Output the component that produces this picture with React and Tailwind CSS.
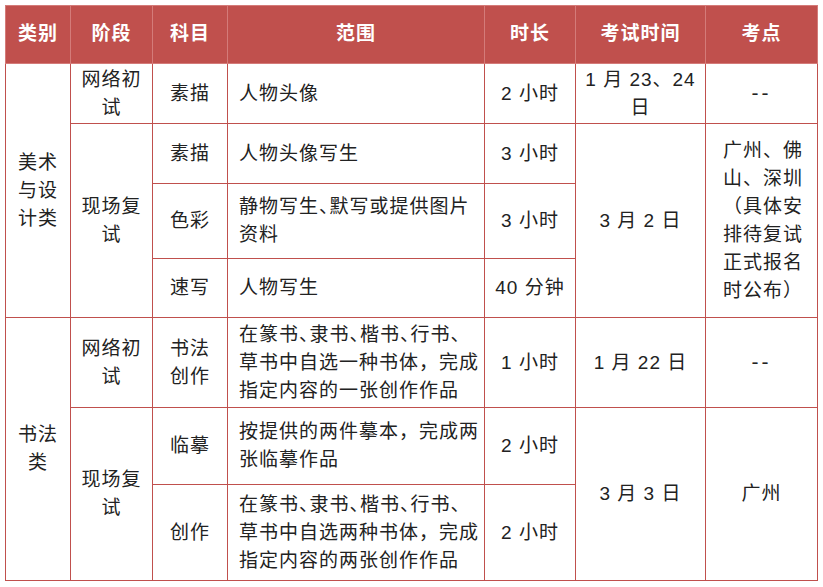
import React from 'react'

const font = "font-['Liberation_Sans','Noto_Sans_CJK_SC',sans-serif]"
const td = 'border border-[#c0504d] text-center align-middle px-[6px]'
const left = 'border border-[#c0504d] text-left align-middle pl-[11px] pr-[4px] leading-[28px] whitespace-nowrap'

// half-width punctuation like the Word table
const P = ({ children }) => <span className="[font-feature-settings:'halt']">{children}</span>
const Dash = () => <span className='text-[21px] tracking-[3px]'>--</span>

export default function App() {
    return (
        <div className={`bg-white p-[5px] ${font}`}>
            <table className='table-fixed border-collapse w-[812px] text-[19px] tracking-[1px] text-[#222]'>
                <colgroup>
                    <col className='w-[65px]' />
                    <col className='w-[82px]' />
                    <col className='w-[75px]' />
                    <col className='w-[257px]' />
                    <col className='w-[91px]' />
                    <col className='w-[130px]' />
                    <col className='w-[112px]' />
                </colgroup>
                <thead>
                    <tr className='h-[58px] bg-[#c0504d] text-white font-bold'>
                        <th className='border border-[#d47b79] font-bold'>类别</th>
                        <th className='border border-[#d47b79] font-bold'>阶段</th>
                        <th className='border border-[#d47b79] font-bold'>科目</th>
                        <th className='border border-[#d47b79] font-bold'>范围</th>
                        <th className='border border-[#d47b79] font-bold'>时长</th>
                        <th className='border border-[#d47b79] font-bold'>考试时间</th>
                        <th className='border border-[#d47b79] font-bold'>考点</th>
                    </tr>
                </thead>
                <tbody className='leading-[28px]'>
                    <tr className='h-[60px]'>
                        <td rowSpan={4} className={td}>美术<br />与设<br />计类</td>
                        <td className={td}>网络初<br />试</td>
                        <td className={td}>素描</td>
                        <td className={left}>人物头像</td>
                        <td className={td}>2 小时</td>
                        <td className={td}>1 月 23、24<br />日</td>
                        <td className={td}><Dash /></td>
                    </tr>
                    <tr className='h-[60px]'>
                        <td rowSpan={3} className={td}>现场复<br />试</td>
                        <td className={td}>素描</td>
                        <td className={left}>人物头像写生</td>
                        <td className={td}>3 小时</td>
                        <td rowSpan={3} className={td}>3 月 2 日</td>
                        <td rowSpan={3} className={`${td} text-left pl-[17px]`}>
                            广州、佛<br />山、深圳<br />（具体安<br />排待复试<br />正式报名<br />时公布）
                        </td>
                    </tr>
                    <tr className='h-[75px]'>
                        <td className={td}>色彩</td>
                        <td className={left}>静物写生<P>、</P>默写或提供图片<br />资料</td>
                        <td className={td}>3 小时</td>
                    </tr>
                    <tr className='h-[59px]'>
                        <td className={td}>速写</td>
                        <td className={left}>人物写生</td>
                        <td className={td}>40 分钟</td>
                    </tr>
                    <tr className='h-[90px]'>
                        <td rowSpan={3} className={td}>书法<br />类</td>
                        <td className={td}>网络初<br />试</td>
                        <td className={td}>书法<br />创作</td>
                        <td className={left}>
                            在篆书<P>、</P>隶书<P>、</P>楷书<P>、</P>行书<P>、</P><br />
                            草书中自选一种书体，完成<br />
                            指定内容的一张创作作品
                        </td>
                        <td className={td}>1 小时</td>
                        <td className={td}>1 月 22 日</td>
                        <td className={td}><Dash /></td>
                    </tr>
                    <tr className='h-[77px]'>
                        <td rowSpan={2} className={td}>现场复<br />试</td>
                        <td className={td}>临摹</td>
                        <td className={left}>按提供的两件摹本，完成两<br />张临摹作品</td>
                        <td className={td}>2 小时</td>
                        <td rowSpan={2} className={td}>3 月 3 日</td>
                        <td rowSpan={2} className={td}>广州</td>
                    </tr>
                    <tr className='h-[96px]'>
                        <td className={td}>创作</td>
                        <td className={left}>
                            在篆书<P>、</P>隶书<P>、</P>楷书<P>、</P>行书<P>、</P><br />
                            草书中自选两种书体，完成<br />
                            指定内容的两张创作作品
                        </td>
                        <td className={td}>2 小时</td>
                    </tr>
                </tbody>
            </table>
        </div>
    )
}
